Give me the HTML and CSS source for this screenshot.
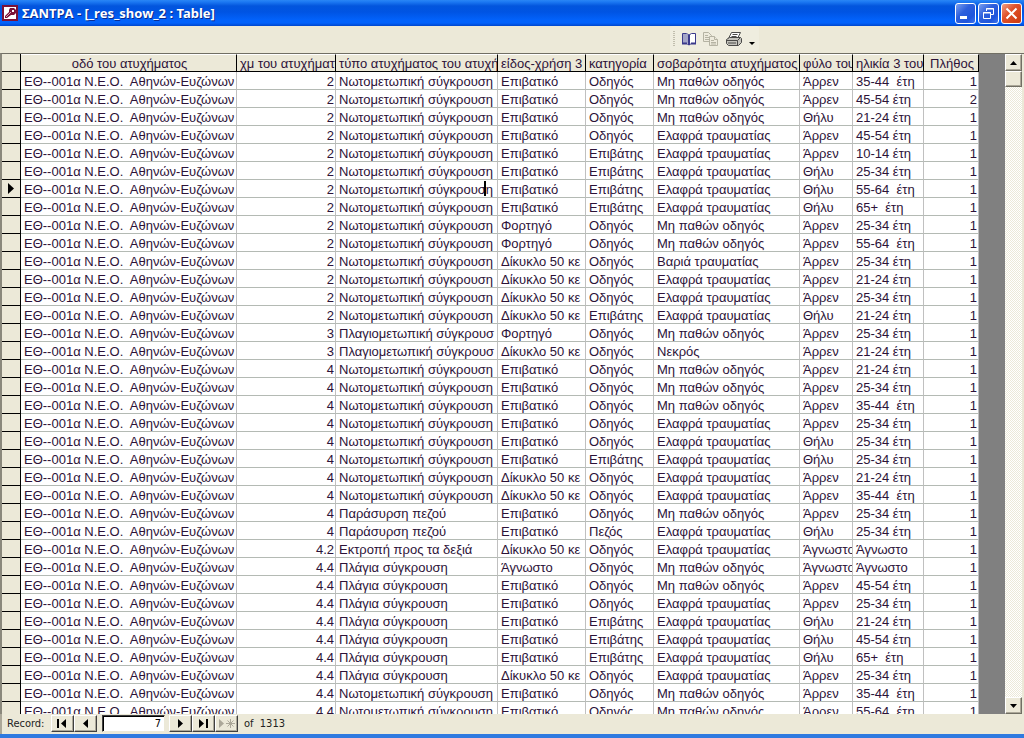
FILE: index.html
```html
<!DOCTYPE html>
<html lang="el">
<head>
<meta charset="utf-8">
<title>ΣΑΝΤΡΑ - [_res_show_2 : Table]</title>
<link rel="stylesheet" href="styles.css">
</head>
<body>
<div class="window">
  <header class="titlebar">
    <svg class="app-icon" width="16" height="16" viewBox="0 0 16 16" aria-hidden="true">
      <rect width="16" height="16" fill="#7b1238"/>
      <rect x="2" y="2" width="12" height="12" fill="#fff"/>
      <path d="M8 3h4l2 2v3l-2 2H9L5 13H3v-2l4-4V5z" fill="#7b1238"/>
      <path d="M10 5h2v2h-2z" fill="#fff"/>
      <path d="M4 12l5-5" stroke="#d9a5b8" stroke-width="1"/>
    </svg>
    <h1 class="title">ΣΑΝΤΡΑ - [_res_show_2 : Table]</h1>
    <div class="window-buttons">
      <button class="win-btn" type="button" aria-label="Minimize">
        <svg width="19" height="19" viewBox="0 0 19 19"><path d="M4 12h7v3H4z" fill="#fff"/></svg>
      </button>
      <button class="win-btn" type="button" aria-label="Restore">
        <svg width="19" height="19" viewBox="0 0 19 19" fill="none" stroke="#fff"><path d="M7.500 7V4.500h7v6H12M7 5h8" /><path d="M4.500 8.500h7v6h-7zM4 9h8"/></svg>
      </button>
      <button class="win-btn win-close" type="button" aria-label="Close">
        <svg width="19" height="19" viewBox="0 0 19 19"><path d="M4.500 4.500l10 10M14.500 4.500l-10 10" stroke="#fff" stroke-width="2"/></svg>
      </button>
    </div>
  </header>

  <div class="toolbar-row">
    <div class="toolbar" role="toolbar" aria-label="Table">
      <span class="grip"></span>
      <button class="tool" type="button" aria-label="Spelling">
        <svg width="16" height="14" viewBox="0 0 16 14">
          <path d="M1.500 1.500h4L8 3l2.500-1.500h4v10h-4L8 13l-2.500-1.500h-4z" fill="#fff" stroke="#3b3a8c"/>
          <path d="M2 2h3.500L8 3.500V12l-2.500-1H2z" fill="#a3a5c8"/>
          <path d="M8 3v10M1 11.500h5M10 11.500h5" stroke="#3b3a8c" stroke-width="2"/>
        </svg>
      </button>
      <button class="tool" type="button" aria-label="Copy" disabled>
        <svg width="16" height="14" viewBox="0 0 16 14" fill="#eeebdd" stroke="#b5b3a3">
          <path d="M.5.5h5l3 3v6h-8z"/><path d="M2 3.500h3M2 5.500h4M2 7.500h4"/>
          <path d="M6.500 4.500h5l3 3v6h-8z"/><path d="M11.500 4.500v3h3M8 8.500h3M8 10.500h5M8 12h5"/>
        </svg>
      </button>
      <button class="tool" type="button" aria-label="Print">
        <svg width="18" height="16" viewBox="0 0 18 16" stroke="#4a4a48" stroke-linejoin="round">
          <path d="M6.500 1.500h9l-3 6h-9z" fill="#fff"/>
          <path d="M7.500 3.500h5M6.500 5.500h5" fill="none"/>
          <path d="M1.500 8.500l3-2h11l1 1v4l-3 3h-10l-2-2z" fill="#c4c3bc"/>
          <path d="M1.500 9.500h11l3-3M12.500 9.500v5M3 12h8" fill="none"/>
        </svg>
      </button>
      <button class="tool-more" type="button" aria-label="Toolbar Options">
        <svg width="6" height="3" viewBox="0 0 6 3"><path d="M0 0h6L3 3z"/></svg>
      </button>
    </div>
  </div>

  <main class="sheet">
    <div class="sheet-view">
      <table class="datasheet">
        <colgroup>
          <col class="c-select"><col class="c-road"><col class="c-km"><col class="c-type"><col class="c-vehicle"><col class="c-role"><col class="c-severity"><col class="c-sex"><col class="c-age"><col class="c-count">
        </colgroup>
        <thead>
          <tr>
            <td></td>
            <th scope="col">οδό του ατυχήματος</th>
            <th scope="col" class="cut">χμ του ατυχήματ</th>
            <th scope="col" class="cut">τύπο ατυχήματος του ατυχή</th>
            <th scope="col" class="cut">είδος-χρήση 3</th>
            <th scope="col" class="cut">κατηγορία</th>
            <th scope="col" class="cut">σοβαρότητα ατυχήματος</th>
            <th scope="col" class="cut">φύλο του</th>
            <th scope="col" class="cut">ηλικία 3 του</th>
            <th scope="col">Πλήθος</th>
          </tr>
        </thead>
        <tbody id="records"></tbody>
      </table>
    </div>
    <div class="scrollbar">
      <button class="scroll-btn" type="button" aria-label="Scroll up"><svg width="7" height="4" viewBox="0 0 7 4"><path d="M0 4h7L3.500 0z"/></svg></button>
      <div class="scroll-thumb"></div>
      <div class="scroll-track"></div>
      <button class="scroll-btn" type="button" aria-label="Scroll down"><svg width="7" height="4" viewBox="0 0 7 4"><path d="M0 0h7L3.500 4z"/></svg></button>
    </div>
  </main>

  <footer class="navigator">
    <label class="nav-label" for="record">Record:</label>
    <button class="nav-btn" type="button" aria-label="First record"><svg width="11" height="9" viewBox="0 0 11 9"><path d="M0 0h2v9H0zM9 0v9L4 4.500z"/></svg></button>
    <button class="nav-btn" type="button" aria-label="Previous record"><svg width="11" height="9" viewBox="0 0 11 9"><path d="M8 0v9L3 4.500z"/></svg></button>
    <input class="nav-input" id="record" type="text" value="7">
    <button class="nav-btn" type="button" aria-label="Next record"><svg width="11" height="9" viewBox="0 0 11 9"><path d="M3 0v9l5-4.500z"/></svg></button>
    <button class="nav-btn" type="button" aria-label="Last record"><svg width="11" height="9" viewBox="0 0 11 9"><path d="M1 0v9l5-4.500zM8 0h2v9H8z"/></svg></button>
    <button class="nav-btn" type="button" aria-label="New record" disabled><svg width="17" height="9" viewBox="0 0 17 9"><path d="M1 0v9l5-4.500z" fill="#aca899"/><path d="M12.500 0v9M8 4.500h9M9.500 1.500l6 6M15.500 1.500l-6 6" stroke="#aca899"/></svg></button>
    <span class="nav-total">of&nbsp; 1313</span>
  </footer>
</div>
<script src="app.js"></script>
</body>
</html>
```

FILE: styles.css
```css
* { box-sizing: border-box; }

body {
  margin: 0;
  font-family: "Liberation Sans", Arial, sans-serif;
  font-size: 13px;
  color: #2c1238;
}

button { font: inherit; padding: 0; border: 0; background: none; }

.window {
  display: flex;
  flex-direction: column;
  height: 100vh;
  background: #ece9d8;
  border-bottom: 4px solid #2f7ae0;
}

/* Title bar */
.titlebar {
  display: flex;
  align-items: center;
  flex: none;
  height: 26px;
  padding: 0 2px;
  background: linear-gradient(#2a86f5 0, #1c78f2 2px, #0355dd 6px, #0054e3 12px, #0262fb 20px, #0262fb 23px, #0046cc 26px);
}

.app-icon { flex: none; }

.title {
  flex: 1;
  margin: 0 0 0 4px;
  font-family: "Noto Sans", "Open Sans", sans-serif;
  font-size: 13px;
  line-height: 18px;
  font-weight: 700;
  color: #fff;
  text-shadow: 1px 1px #0b2a8c;
  white-space: nowrap;
}

.window-buttons { display: flex; gap: 2px; }

.win-btn {
  display: grid;
  place-items: center;
  width: 21px;
  height: 21px;
  border: 1px solid #fff;
  border-radius: 3px;
  background: linear-gradient(135deg, #7a9ff0, #2d5fdc 40%, #1f55dc 75%, #3d75ee);
}

.win-close { background: linear-gradient(135deg, #f0a088, #e0532c 40%, #d5431a 75%, #c93c14); }

/* Toolbar */
.toolbar-row {
  display: flex;
  flex: none;
  height: 27px;
  padding-left: 670px;
}

.toolbar {
  display: flex;
  align-items: center;
  gap: 6px;
  height: 25px;
  padding: 0 4px 0 3px;
  background: #efeddf;
  border-radius: 2px;
}

.grip {
  width: 2px;
  height: 16px;
  background: repeating-linear-gradient(#c1beae 0 1px, #efeddf 1px 2px);
}

.tool, .tool-more { display: grid; place-items: center; }
.tool-more { align-self: flex-end; padding-bottom: 6px; }

/* Datasheet */
.sheet {
  display: flex;
  flex: 1;
  min-height: 0;
  padding-right: 2px;
  border-top: 1px solid #716f64;
  border-left: 2px solid #8a887c;
}

.sheet-view {
  flex: 1;
  min-width: 0;
  overflow: hidden;
  background: #808080;
}

.datasheet {
  width: 977px;
  table-layout: fixed;
  border-collapse: separate;
  border-spacing: 0;
  background: #fff;
}

.c-select { width: 19px; }
.c-road { width: 216px; }
.c-km { width: 99px; }
.c-type { width: 162px; }
.c-vehicle { width: 88px; }
.c-role { width: 68px; }
.c-severity { width: 146px; }
.c-sex { width: 53px; }
.c-age { width: 71px; }
.c-count { width: 55px; }

.datasheet th,
.datasheet td {
  height: 18px;
  padding: 2px 1px 0 3px;
  line-height: 15px;
  font-weight: 400;
  text-align: left;
  white-space: pre;
  overflow: hidden;
  border-right: 1px solid #c0c0c0;
  border-bottom: 1px solid #b4bab4;
}

.datasheet thead th,
.datasheet thead td,
.datasheet tbody th {
  background: #ece9d8;
  border-right-color: #000;
  border-bottom-color: #000;
}

.datasheet thead th {
  text-align: center;
  border-top: 1px solid #fff;
  padding-top: 0;
}

.datasheet thead .cut { text-align: left; }
.datasheet .num { text-align: right; }
.datasheet tbody th { padding: 0; }

.marker { display: block; margin: 0 auto; }

.datasheet .editing { position: relative; }

.caret {
  position: absolute;
  top: 1px;
  right: 11px;
  width: 2px;
  height: 15px;
  background: #000;
}

/* Scroll bar */
.scrollbar {
  display: flex;
  flex-direction: column;
  flex: none;
  width: 17px;
}

.scroll-btn,
.scroll-thumb {
  display: grid;
  place-items: center;
  flex: none;
  height: 17px;
  background: #ece9d8;
  border: 1px solid;
  border-color: #fff #716f64 #716f64 #fff;
  box-shadow: inset -1px -1px #aca899;
}

.scroll-thumb { height: 16px; }

.scroll-track {
  flex: 1;
  background: repeating-conic-gradient(#fff 0 25%, #ece9d8 0 50%) 0 0 / 2px 2px;
}

/* Record navigator */
.navigator {
  display: flex;
  align-items: center;
  flex: none;
  height: 20px;
  padding: 0 0 1px 5px;
  font-family: "DejaVu Sans Condensed", "DejaVu Sans", sans-serif;
  font-size: 11px;
  color: #222;
  border-left: 2px solid #aca899;
}

.nav-label { width: 44px; }

.nav-btn {
  display: grid;
  place-items: center;
  width: 23px;
  height: 17px;
  border: 1px solid;
  border-color: #fff #404040 #404040 #fff;
  box-shadow: inset -1px -1px #aca899;
}

.nav-input {
  width: 63px;
  height: 17px;
  margin: 0 4px 0 5px;
  padding: 0 3px;
  font: inherit;
  text-align: right;
  background: #fff;
  border: 1px solid;
  border-color: #404040 #ece9d8 #ece9d8 #404040;
  box-shadow: inset 1px 1px #000;
  border-radius: 0;
}

.nav-total { margin-left: 6px; white-space: nowrap; }
```

FILE: app.js
```js
const ROAD = "ΕΘ--001α Ν.Ε.Ο.  Αθηνών-Ευζώνων";
const CURRENT = 7;

const TYPE = {
  N: "Νωτομετωπική σύγκρουση",
  P: "Πλαγιομετωπική σύγκρουσ",
  W: "Παράσυρση πεζού",
  X: "Εκτροπή προς τα δεξιά",
  S: "Πλάγια σύγκρουση",
};
const VEHICLE = { C: "Επιβατικό", T: "Φορτηγό", D: "Δίκυκλο 50 κε", U: "Άγνωστο" };
const ROLE = { D: "Οδηγός", P: "Επιβάτης", W: "Πεζός" };
const SEVERITY = { N: "Μη παθών οδηγός", L: "Ελαφρά τραυματίας", H: "Βαριά τραυματίας", K: "Νεκρός" };
const SEX = { M: "Άρρεν", F: "Θήλυ", U: "Άγνωστο" };
const AGE = {
  10: "10-14 έτη", 21: "21-24 έτη", 25: "25-34 έτη", 35: "35-44  έτη",
  45: "45-54 έτη", 55: "55-64  έτη", 65: "65+  έτη", 0: "Άγνωστο",
};

// km, type, vehicle, role, severity, sex, age group, count
const records = `
2 N C D N M 35 1
2 N C D N M 45 2
2 N C D N F 21 1
2 N C D L M 45 1
2 N C P L M 10 1
2 N C P L F 25 1
2 N C P L F 55 1
2 N C P L F 65 1
2 N T D N M 25 1
2 N T D N M 55 1
2 N D D H M 25 1
2 N D D L M 21 1
2 N D D L M 25 1
2 N D P L F 21 1
3 P T D N M 25 1
3 P D D K M 21 1
4 N C D N M 21 1
4 N C D N M 25 1
4 N C D N M 35 1
4 N C D L M 25 1
4 N C D L F 25 1
4 N C P L F 25 1
4 N D D L M 21 1
4 N D D L M 35 1
4 W C D N M 25 1
4 W C W L F 25 1
4.2 X D D L U 0 1
4.4 S U D N U 0 1
4.4 S C D N M 45 1
4.4 S C D L M 25 1
4.4 S C P L F 21 1
4.4 S C P L F 45 1
4.4 S C P L F 65 1
4.4 S D D L M 25 1
4.4 N C D N M 35 1
4.4 N C D N M 55 1
`.trim().split("\n").map((line) => line.split(" "));

const marker = '<svg class="marker" width="6" height="11" viewBox="0 0 6 11"><path d="M0 0v11l6-5.500z"/></svg>';

document.getElementById("records").innerHTML = records
  .map(([km, type, vehicle, role, severity, sex, age, count], i) => {
    const current = i + 1 === CURRENT;
    return `<tr>
      <th scope="row">${current ? marker : ""}</th>
      <td>${ROAD}</td>
      <td class="num">${km}</td>
      <td${current ? ' class="editing"' : ""}>${TYPE[type]}${current ? '<span class="caret"></span>' : ""}</td>
      <td>${VEHICLE[vehicle]}</td>
      <td>${ROLE[role]}</td>
      <td>${SEVERITY[severity]}</td>
      <td>${SEX[sex]}</td>
      <td>${AGE[age]}</td>
      <td class="num">${count}</td>
    </tr>`;
  })
  .join("");
```
